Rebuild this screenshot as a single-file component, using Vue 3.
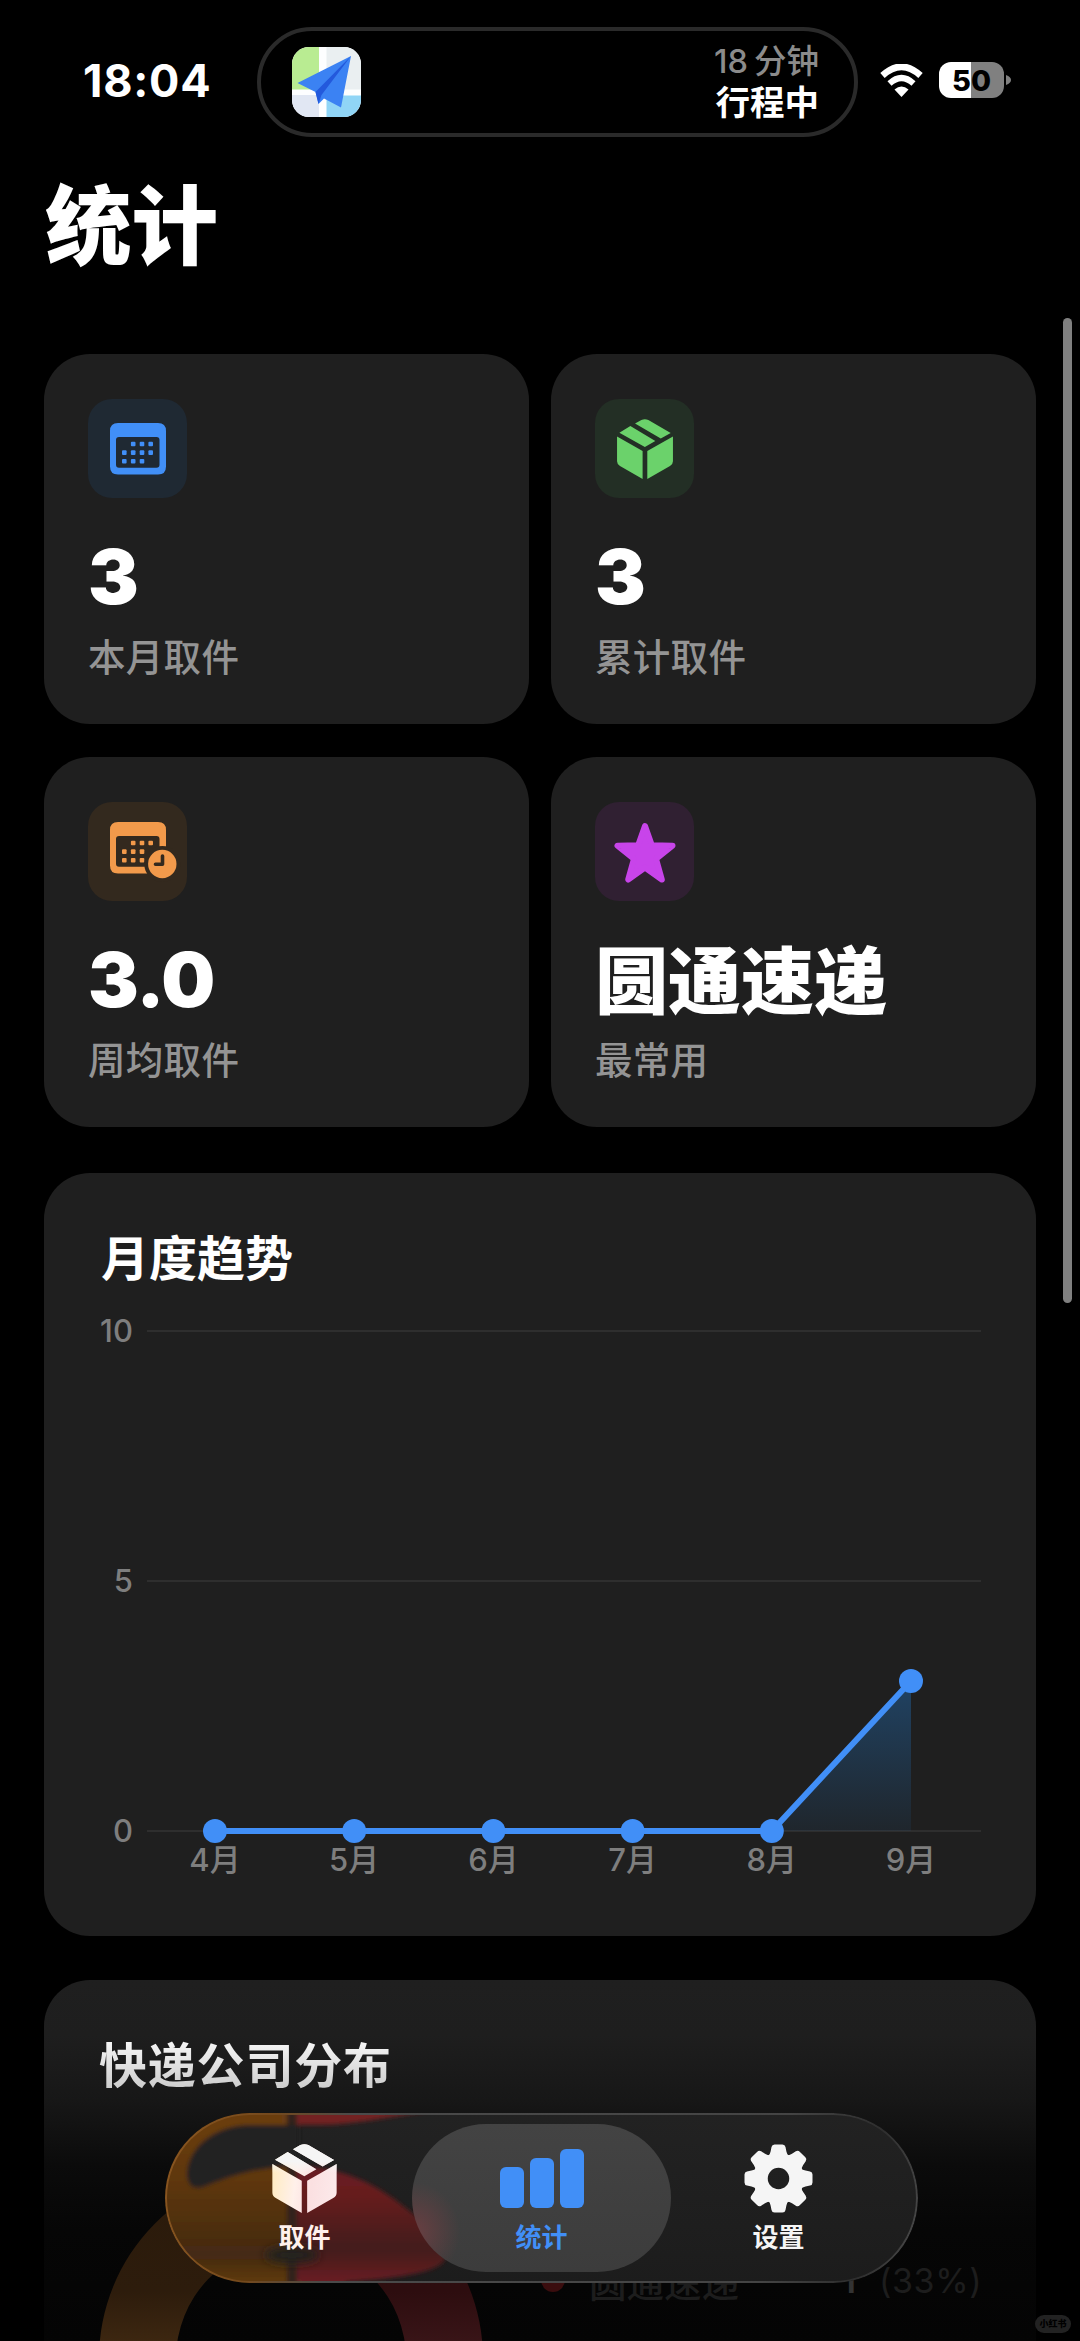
<script setup>
const stats = [
  { icon: 'calendar', tint: 'blue', value: '3', label: '本月取件' },
  { icon: 'box', tint: 'green', value: '3', label: '累计取件' },
  { icon: 'clock', tint: 'orange', value: '3.0', label: '周均取件' },
  { icon: 'star', tint: 'purple', value: '圆通速递', label: '最常用', cjk: true },
]

const boxPath =
  'M0 20 29.4 36.8V69L3.4 54Q0 52 0 48.500Z M64.300 20 34.800 36.800V69L60.900 54Q64.300 52 64.300 48.500Z M2.700 15.700 15.300 8 44 25.200 32 32.200Z M20.700 5.300 28 1.100Q32 -.8 36 1.100L61.700 16 50.300 22.500Z'

const cellsFull = [
  [23.2, 21], [32, 21], [40.7, 21],
  [14.3, 29.6], [23.2, 29.6], [32, 29.6], [40.7, 29.6],
  [14.3, 38.2], [23.2, 38.2], [32, 38.2],
]
const cellsClock = cellsFull.filter((c, i) => i !== 6)

const months = ['4月', '5月', '6月', '7月', '8月', '9月']
const counts = [0, 0, 0, 0, 0, 3]
const points = counts.map((n, i) => ({ x: 171 + i * 139.2, y: 508 - n * 50, label: months[i] }))
const line = points.map((p) => `${p.x},${p.y}`).join(' ')
const area = `${points[0].x},508 ${line} ${points[5].x},508`
const ticks = [
  { v: 10, y: 8 },
  { v: 5, y: 258 },
  { v: 0, y: 508 },
]
const teeth = [0, 45, 90, 135, 180, 225, 270, 315]
</script>

<template>
  <div class="screen">
    <header class="status">
      <span class="time">18:04</span>
      <div class="island">
        <svg class="app" viewBox="0 0 69 70">
          <rect width="69" height="70" fill="#fdfeff" />
          <rect width="27" height="42.500" fill="#b9ec92" />
          <rect x="34.500" width="35" height="42.500" fill="#eaeff1" />
          <rect y="48" width="27" height="22" fill="#e1e7f3" />
          <rect x="34.500" y="48.500" width="35" height="22" fill="#90d5f6" />
          <path d="M59 9 5.500 36 23.500 45 26.500 57 32 51.500 49 60.500Z" fill="#3b82f3" />
          <path d="M59 9 23.500 45 26.500 57 29.500 48Z" fill="#2359dc" />
        </svg>
        <div class="trip">
          <span class="eta">18<i></i>分钟</span>
          <span class="state">行程中</span>
        </div>
      </div>
      <svg class="wifi" viewBox="0 0 43 33">
        <path d="M2.500 11.500Q21.500 -6 40.500 11.500" fill="none" stroke="#fff" stroke-width="6.500" />
        <path d="M9.500 19.500Q21.500 8.500 33.500 19.500" fill="none" stroke="#fff" stroke-width="6" />
        <path d="M14.500 25.500Q21.500 19.500 28.500 25.500L21.500 33Z" fill="#fff" />
      </svg>
      <div class="battery"><span>50</span></div>
      <svg class="nub" viewBox="0 0 5 12"><path d="M0 1Q5 3 5 6T0 11Z" fill="#808080" /></svg>
    </header>

    <h1>统计</h1>

    <section class="grid">
      <article v-for="s in stats" :key="s.label" class="card stat">
        <div class="badge" :class="s.tint">
          <svg v-if="s.icon === 'calendar'" class="cal" viewBox="0 0 56 51.500">
            <path
              fill-rule="evenodd"
              fill="currentColor"
              d="M8 0H48Q56 0 56 8V43.500Q56 51.500 48 51.500H8Q0 51.500 0 43.500V8Q0 0 8 0ZM9 14Q6 14 6 17V41.700Q6 44.700 9 44.700H46.500Q49.500 44.700 49.500 41.700V17Q49.500 14 46.500 14Z"
            />
            <rect v-for="(c, i) in cellsFull" :key="i" :x="c[0] - 2.3" :y="c[1] - 2.3" width="4.600" height="4.600" rx="1" fill="currentColor" />
          </svg>
          <svg v-else-if="s.icon === 'clock'" class="cal raised" viewBox="0 0 56 51.500">
            <path
              fill-rule="evenodd"
              fill="currentColor"
              d="M8 0H48Q56 0 56 8V43.500Q56 51.500 48 51.500H8Q0 51.500 0 43.500V8Q0 0 8 0ZM9 14Q6 14 6 17V41.700Q6 44.700 9 44.700H46.500Q49.500 44.700 49.500 41.700V17Q49.500 14 46.500 14Z"
            />
            <rect v-for="(c, i) in cellsClock" :key="i" :x="c[0] - 2.3" :y="c[1] - 2.3" width="4.600" height="4.600" rx="1" fill="currentColor" />
            <circle cx="52.300" cy="42" r="18" fill="#33291e" />
            <circle cx="52.300" cy="42" r="14.200" fill="currentColor" />
            <path d="M52.500 34V42.200H45.500" fill="none" stroke="#33291e" stroke-width="3.600" stroke-linecap="round" stroke-linejoin="round" />
          </svg>
          <svg v-else-if="s.icon === 'box'" class="box" viewBox="0 0 64.300 69">
            <path :d="boxPath" fill="currentColor" />
          </svg>
          <svg v-else class="star" viewBox="0 0 62 62">
            <path
              d="M31 4 37.800 23.300 58.500 23.700 42 36.800 47.800 57.500 31 45.500 14.200 57.500 20 36.800 3.500 23.700 24.200 23.300Z"
              fill="currentColor"
              stroke="currentColor"
              stroke-width="6"
              stroke-linejoin="round"
            />
          </svg>
        </div>
        <div class="value" :class="{ cjk: s.cjk }">{{ s.value }}</div>
        <div class="label">{{ s.label }}</div>
      </article>
    </section>

    <section class="card trend">
      <h2 class="shift">月度趋势</h2>
      <svg class="chart" viewBox="0 -20 992 580">
        <defs>
          <linearGradient id="areaFill" x1="0" y1="0" x2="0" y2="1">
            <stop offset="0" stop-color="#2282dd" stop-opacity=".36" />
            <stop offset="1" stop-color="#2282dd" stop-opacity=".07" />
          </linearGradient>
        </defs>
        <g v-for="t in ticks" :key="t.v">
          <line x1="103" x2="937" :y1="t.y" :y2="t.y" stroke="#2e2e2e" stroke-width="2" />
          <text x="89" :y="t.y + 11" text-anchor="end">{{ t.v }}</text>
        </g>
        <polygon :points="area" fill="url(#areaFill)" />
        <polyline :points="line" fill="none" stroke="#418ff7" stroke-width="6" />
        <g v-for="p in points" :key="p.label">
          <circle :cx="p.x" :cy="p.y" r="12" fill="#418ff7" />
          <text :x="p.x" y="548" text-anchor="middle">{{ p.label }}</text>
        </g>
      </svg>
    </section>

    <section class="card share">
      <h2>快递公司分布</h2>
      <div class="split">
        <svg class="donut" viewBox="0 0 384 192">
          <defs>
            <linearGradient id="dOrange" x1="0" y1="0" x2="0" y2="1">
              <stop offset="0" stop-color="#2a1a0b" />
              <stop offset=".65" stop-color="#2d1c0c" />
              <stop offset="1" stop-color="#422a12" />
            </linearGradient>
            <linearGradient id="dRed" x1="0" y1="0" x2="0" y2="1">
              <stop offset="0" stop-color="#2b0b0d" />
              <stop offset=".65" stop-color="#2d0d0f" />
              <stop offset="1" stop-color="#3d171a" />
            </linearGradient>
          </defs>
          <path d="M0 192A192 192 0 0 1 188 0V77A115 115 0 0 0 77 192Z" fill="url(#dOrange)" />
          <path d="M384 192A192 192 0 0 0 196 0V77A115 115 0 0 1 307 192Z" fill="url(#dRed)" />
        </svg>
        <div class="legend">
          <span class="dot"></span>
          <span class="name">圆通速递</span>
          <b>1</b>
          <span class="pct">(33%)</span>
        </div>
      </div>
    </section>

    <nav class="tabs">
      <svg class="glass" viewBox="0 0 753 170">
        <defs>
          <linearGradient id="gOrange" x1="0" y1="0" x2="0" y2="1">
            <stop offset="0" stop-color="#6e3f12" />
            <stop offset=".4" stop-color="#5f370f" />
            <stop offset=".8" stop-color="#442a12" />
            <stop offset="1" stop-color="#69400f" />
          </linearGradient>
          <linearGradient id="gRed" gradientUnits="userSpaceOnUse" x1="0" y1="0" x2="0" y2="170">
            <stop offset="0" stop-color="#742124" />
            <stop offset=".5" stop-color="#651d1f" />
            <stop offset=".8" stop-color="#421a1c" />
            <stop offset="1" stop-color="#6b2022" />
          </linearGradient>
          <filter id="soft" x="-10%" y="-10%" width="120%" height="120%"><feGaussianBlur stdDeviation="2.200" /></filter>
          <filter id="softer" x="-50%" y="-50%" width="200%" height="200%"><feGaussianBlur stdDeviation="5" /></filter>
        </defs>
        <g filter="url(#soft)">
          <path d="M-10 -10H123V180H-10Z" fill="url(#gOrange)" />
          <path d="M134 12H82C52 13 24 32 22 60C22 72 28 77 38 74C64 64 88 54 134 53Z" fill="#212121" />
          <path d="M132 -10H262V-2C220 5 180 13 150 12H132Z" fill="url(#gRed)" />
          <path d="M132 54C180 52 218 76 242 96C268 116 284 132 280 146C276 158 240 165 180 169V180H132Z" fill="url(#gRed)" />
          <path d="M122 -10H132V12H122ZM122 54H132V180H122Z" fill="#33201b" />
        </g>
        <ellipse cx="127" cy="142" rx="27" ry="8" fill="#24211f" filter="url(#softer)" />
      </svg>
      <div class="tab">
        <svg class="tbox" viewBox="0 0 64.300 69">
          <defs>
            <linearGradient id="warm" gradientUnits="userSpaceOnUse" x1="0" y1="40" x2="64" y2="48">
              <stop offset="0" stop-color="#ffecc4" />
              <stop offset=".35" stop-color="#fff0ea" />
              <stop offset=".6" stop-color="#fbe0e1" />
              <stop offset="1" stop-color="#fce9ea" />
            </linearGradient>
            <linearGradient id="cap" x1="0" y1="0" x2="0" y2="1">
              <stop offset=".25" stop-color="#f5f5f5" />
              <stop offset=".42" stop-color="#f5f5f5" stop-opacity="0" />
            </linearGradient>
          </defs>
          <path :d="boxPath" fill="url(#warm)" />
          <path :d="boxPath" fill="url(#cap)" />
        </svg>
        <span class="warm">取件</span>
      </div>
      <div class="tab active">
        <svg class="bars" viewBox="0 0 84 69">
          <rect y="23" width="24" height="41" rx="6" fill="#418ff7" />
          <rect x="30" y="14" width="24" height="50" rx="6" fill="#418ff7" />
          <rect x="60" y="5" width="24" height="59" rx="6" fill="#418ff7" />
        </svg>
        <span>统计</span>
      </div>
      <div class="tab">
        <svg class="gear" viewBox="-34.500 -34.500 69 69">
          <path
            v-for="a in teeth"
            :key="a"
            :transform="`rotate(${a})`"
            d="M-10.500 -22Q-8.500 -24 -7.900 -27L-7 -31.500Q-6.500 -34 -4 -34H4Q6.500 -34 7 -31.500L7.900 -27Q8.500 -24 10.500 -22Z"
            fill="#f5f5f5"
          />
          <circle r="18" fill="none" stroke="#f5f5f5" stroke-width="14.500" />
        </svg>
        <span>设置</span>
      </div>
    </nav>

    <div class="scrollbar"></div>
    <div class="mark">小红书</div>
  </div>
</template>

<style>
body {
  background: #000;
}
</style>

<style scoped>
.screen {
  position: relative;
  width: 1080px;
  height: 2341px;
  overflow: hidden;
  background: #000;
  color: #fff;
  font-family: Inter, 'Noto Sans CJK SC', sans-serif;
  display: flex;
  flex-direction: column;
}
.screen > * {
  flex: none;
}
.status {
  display: flex;
  align-items: center;
  height: 110px;
  padding: 27px 0 0 83px;
}
.time {
  width: 174px;
  font-size: 45px;
  font-weight: 700;
  line-height: 60px;
  letter-spacing: 0.8px;
  margin-top: -2px;
}
.island {
  box-sizing: border-box;
  width: 601px;
  height: 110px;
  border: 4px solid #2a2a2a;
  border-radius: 55px;
  display: flex;
  align-items: center;
  justify-content: space-between;
  padding: 0 35px 0 31px;
}
.app {
  width: 69px;
  height: 70px;
  border-radius: 17px;
}
.trip {
  display: flex;
  flex-direction: column;
  align-items: flex-end;
  line-height: 41px;
}
.eta {
  font-size: 32.5px;
  color: #8b8b8b;
  font-weight: 500;
}
.eta i {
  display: inline-block;
  width: 6px;
}
.state {
  font-size: 34.5px;
  font-weight: 700;
}
.wifi {
  width: 43px;
  height: 33px;
  margin: -3px 16px 0 22px;
}
.battery {
  width: 65px;
  height: 36px;
  border-radius: 12px;
  margin-top: -4px;
  background: linear-gradient(90deg, #fff 50%, #808080 50%);
  color: #000;
  text-align: center;
  font-size: 29px;
  font-weight: 800;
  line-height: 37px;
}
.nub {
  width: 5px;
  height: 12px;
  margin: -4px 0 0 2px;
}
h1 {
  margin: 30px 0 0 45px;
  font-size: 86.5px;
  line-height: 120px;
  font-weight: 900;
}
.grid {
  display: grid;
  grid-template-columns: 485px 485px;
  gap: 33px 22px;
  margin: 67px 44px 0;
}
.card {
  box-sizing: border-box;
  background: #1f1f1f;
  border-radius: 46px;
}
.stat {
  height: 370px;
  padding: 45px 44px 0;
}
.badge {
  width: 99px;
  height: 99px;
  border-radius: 24px;
  display: flex;
  align-items: center;
  justify-content: center;
}
.badge svg {
  overflow: visible;
}
.blue {
  background: #1f2933;
  color: #418ff7;
}
.green {
  background: #232f25;
  color: #6bd26b;
}
.orange {
  background: #33291e;
  color: #f29a4b;
}
.purple {
  background: #302032;
  color: #c844ea;
}
.cal {
  width: 56px;
  height: 51.5px;
}
.raised {
  margin-top: -7px;
}
.box {
  width: 56px;
  height: 60px;
}
.star {
  width: 62px;
  height: 62px;
  margin-top: 2px;
}
.value {
  margin-top: 33px;
  height: 90px;
  line-height: 90px;
  font-size: 76px;
  font-weight: 900;
  letter-spacing: -1px;
}
.value.cjk {
  box-sizing: border-box;
  padding-top: 3px;
  font-size: 73px;
  letter-spacing: 0;
}
.label {
  margin-top: 12px;
  font-size: 37.5px;
  line-height: 50px;
  font-weight: 500;
  letter-spacing: 0.3px;
  color: #949494;
}
.trend {
  height: 763px;
  margin: 46px 44px 0;
  padding-top: 51px;
}
h2 {
  margin: 0 0 0 55px;
  font-size: 48px;
  line-height: 70px;
  font-weight: 700;
  letter-spacing: 0.8px;
}
h2.shift {
  margin-left: 57px;
  letter-spacing: 0;
}
.chart {
  display: block;
  width: 992px;
  height: 580px;
  margin-top: 9px;
}
.chart text {
  font-size: 31px;
  font-weight: 500;
  fill: #7e7e7e;
  font-family: Inter, 'Noto Sans CJK SC', sans-serif;
}
.share {
  height: 600px;
  margin: 44px 44px 0;
  padding-top: 51px;
  background: linear-gradient(#1f1f1f 0, #1e1e1e 55px, #171717 120px, #0b0b0b 185px, #060606 250px, #040404 361px);
}
.share h2 {
  background: linear-gradient(#f6f6f6 10px, #c9c9c9 62px);
  background-clip: text;
  -webkit-background-clip: text;
  color: transparent;
}
.split {
  display: flex;
  align-items: flex-start;
  padding: 66px 0 0 55px;
}
.donut {
  flex: none;
  width: 384px;
  height: 192px;
}
.legend {
  flex: none;
  display: flex;
  align-items: center;
  height: 50px;
  margin: 88px 0 0 58px;
  color: #1d1d1d;
  font-size: 37.5px;
}
.dot {
  width: 24px;
  height: 24px;
  border-radius: 50%;
  background: #3a0d0e;
}
.name {
  margin-left: 24px;
  width: 252px;
  font-weight: 500;
}
.legend b {
  width: 38px;
  font-weight: 600;
  font-size: 36px;
  color: #333;
}
.pct {
  font-size: 34px;
  letter-spacing: 0.6px;
}
.tabs {
  position: absolute;
  left: 165px;
  top: 2113px;
  width: 753px;
  height: 170px;
  border-radius: 85px;
  background: linear-gradient(#222, #1c1c1c);
  overflow: hidden;
  display: flex;
  justify-content: center;
}
.tabs::after {
  content: '';
  position: absolute;
  inset: 0;
  border-radius: 85px;
  border: 2px solid transparent;
  background: linear-gradient(100deg, #8a5620 0, #74491d 14%, #4a4a4a 24%, #444 80%, #2e2e2e 92%, #4c4c4c) border-box;
  -webkit-mask: linear-gradient(#000 0 0) padding-box, linear-gradient(#000 0 0);
  -webkit-mask-composite: xor;
  mask-composite: exclude;
}
.glass {
  position: absolute;
  inset: 0;
  width: 753px;
  height: 170px;
}
.tab {
  position: relative;
  width: 237px;
  display: flex;
  flex-direction: column;
  align-items: center;
  padding-top: 31px;
  font-size: 26px;
  font-weight: 700;
  line-height: 36px;
  color: #f5f5f5;
}
.tab svg {
  position: relative;
  height: 69px;
}
.tab span {
  position: relative;
  margin-top: 7px;
}
.tab .warm {
  color: #fff1ec;
}
.tab.active {
  color: #418ff7;
}
.active::before {
  content: '';
  position: absolute;
  left: -11px;
  top: 11px;
  width: 259px;
  height: 148px;
  border-radius: 74px;
  background: radial-gradient(ellipse 46px 50px at 2px 108px, #6a3f42 0, rgba(64, 64, 64, 0) 100%), linear-gradient(#434343, #3c3c3c);
}
.tbox {
  width: 65px;
}
.bars {
  width: 84px;
}
.gear {
  width: 69px;
}
.scrollbar {
  position: absolute;
  left: 1063px;
  top: 318px;
  width: 9px;
  height: 985px;
  border-radius: 5px;
  background: #808080;
}
.mark {
  position: absolute;
  left: 1035px;
  top: 2315px;
  width: 36px;
  height: 18px;
  border-radius: 9px;
  background: #222;
  color: #000;
  font-size: 9px;
  font-weight: 900;
  line-height: 18px;
  text-align: center;
}
</style>
